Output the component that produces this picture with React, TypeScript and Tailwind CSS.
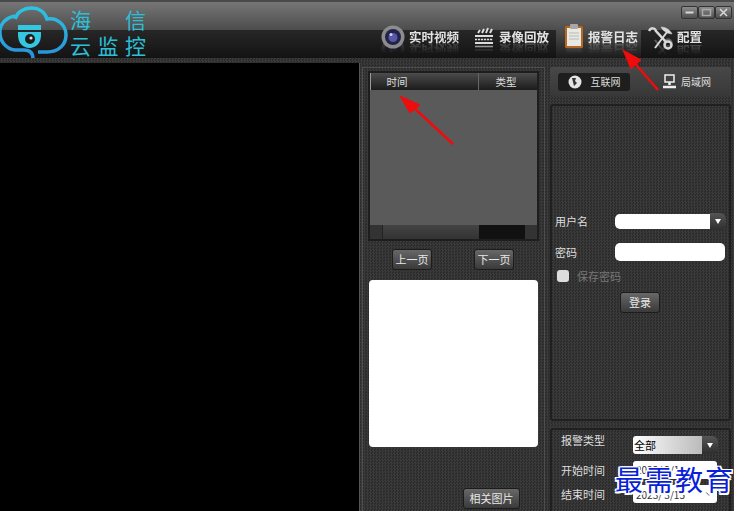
import { ChevronDown } from "lucide-react"

const font = "font-['Noto_Sans_CJK_SC','Liberation_Sans',sans-serif]"
const dots = "bg-[repeating-conic-gradient(#3a3a3a_0_25%,#2b2b2b_0_50%)] bg-[length:3px_3px]"
const reflect = "[-webkit-box-reflect:below_-12px_linear-gradient(transparent_30%,rgba(255,255,255,0.4))]"

function Logo() {
  return (
    <svg width="68" height="60" viewBox="0 0 68 60" className="shrink-0">
      <defs>
        <linearGradient id="cloud" x1="0" y1="0" x2="0" y2="1">
          <stop offset="0" stopColor="#2cc4e0" />
          <stop offset="1" stopColor="#2a8fd8" />
        </linearGradient>
      </defs>
      <path
        d="M15 14 C8 15 1 20 0 28 C-1 39 6 47 15 48 L24 48 C29 48 33 50 33 57 M15 17 C17 10 24 6 31 6 C39 6 45 10 47 17 C57 15 66 23 66 33 C66 43 58 50 47 50 L38 50"
        fill="none"
        stroke="url(#cloud)"
        strokeWidth="3.5"
      />
      <path d="M18 23 H41 V28 H18 Z" fill="#35c6e2" />
      <path d="M18 30 H41 V33 C41 41 36 46 29.5 46 C23 46 18 41 18 33 Z" fill="#35c6e2" />
      <circle cx="30" cy="37" r="5" fill="#1c1c1c" />
      <circle cx="31" cy="36" r="1.6" fill="#ddd" />
    </svg>
  )
}

function NavItem({
  icon,
  label,
  active,
  className,
}: {
  icon: React.ReactNode
  label: string
  active?: boolean
  className: string
}) {
  return (
    <div
      className={`flex h-[37px] items-start rounded-t-md pt-[4px] text-[12.5px] font-bold text-[#e2e2e2] ${active ? "bg-gradient-to-b from-[#5c5c5c] via-[#3e3e3e] to-[#1c1c1c]" : ""} ${className}`}
    >
      <div className={`flex items-center gap-[4px] ${reflect}`}>
        {icon}
        <span>{label}</span>
      </div>
    </div>
  )
}

function Btn({ label, className = "" }: { label: string; className?: string }) {
  return (
    <button
      className={`flex h-[21px] items-center justify-center rounded-[3px] border border-[#1c1c1c] bg-gradient-to-b from-[#686868] to-[#3a3a3a] text-[11px] text-[#e8e8e8] ${className}`}
    >
      {label}
    </button>
  )
}

function DropArrow() {
  return (
    <div className="flex h-full w-[16px] items-center justify-center rounded-r-md bg-gradient-to-b from-[#555] to-[#2e2e2e]">
      <div className="h-0 w-0 border-x-[3px] border-t-[5px] border-x-transparent border-t-white" />
    </div>
  )
}

function WinBtn({ children }: { children: React.ReactNode }) {
  return (
    <div className="flex h-[13px] w-[17px] items-center justify-center rounded-[2px] border border-[#333] bg-gradient-to-b from-[#8c8c8c] to-[#4e4e4e]">
      <svg width="11" height="9" viewBox="0 0 11 9" fill="none" stroke="#d8d8d8" strokeWidth="1.5">
        {children}
      </svg>
    </div>
  )
}

export default function App() {
  return (
    <div className={`relative h-[511px] w-[738px] overflow-hidden bg-white ${font}`}>
      <div className="flex h-full w-[734px] flex-col border-t-2 border-[#4a4a4a]">
        <header className="flex h-[56px] shrink-0 items-start justify-between bg-[linear-gradient(#767676_0%,#4c4c4c_50%,#272727_50%,#131313_100%)]">
          <div className="flex items-start">
            <Logo />
            <div className="ml-[2px] mt-[4px] grid grid-cols-3 text-[21px] leading-[26px] text-[#2bc0d8]">
              <span className="w-[27.5px]">海</span>
              <span className="w-[27.5px]"></span>
              <span className="w-[27.5px]">信</span>
              <span>云</span>
              <span>监</span>
              <span>控</span>
            </div>
          </div>
          <div className="flex flex-col items-end">
            <div className="mr-[2px] mt-[4px] flex">
              <WinBtn>
                <path d="M1.5 4.5 H9.5" strokeWidth="2" />
              </WinBtn>
              <WinBtn>
                <rect x="1.5" y="1.5" width="8" height="6" stroke="#aaa" />
              </WinBtn>
              <WinBtn>
                <path d="M2 1 L9 8 M9 1 L2 8" />
              </WinBtn>
            </div>
            <nav className="mr-[24px] mt-[2px] flex items-end">
              <NavItem
                className="w-[93px] pl-[8px]"
                label="实时视频"
                icon={
                  <svg width="24" height="24" viewBox="0 0 24 24">
                    <circle cx="12" cy="12" r="11.5" fill="#8c8c8c" />
                    <circle cx="12" cy="12" r="8" fill="#22224a" />
                    <circle cx="12" cy="12.5" r="4.5" fill="#5858a8" />
                    <circle cx="10" cy="9.5" r="1.5" fill="#cfd2f5" />
                  </svg>
                }
              />
              <NavItem
                className="w-[90px] pl-[7px]"
                label="录像回放"
                icon={
                  <svg width="22" height="24" viewBox="0 0 22 24" fill="none" stroke="#dcdcdc">
                    <path d="M5 8 L7 5 M9 8 L11 4 M13 8 L15 3 M17 8 L19 4" strokeWidth="2" />
                    <path d="M2 11 H20" strokeWidth="2" />
                    <path d="M2 14.5 H20" strokeWidth="1.5" strokeDasharray="2 1" />
                    <path d="M2 18 H20" strokeWidth="2" />
                    <path d="M2 21.5 H20" strokeWidth="1.5" stroke="#999" />
                  </svg>
                }
              />
              <NavItem
                active
                className="w-[85px] pl-[8px]"
                label="报警日志"
                icon={
                  <svg width="20" height="26" viewBox="0 0 20 26" className="mt-[-2px]">
                    <rect x="1" y="3" width="18" height="22" rx="1.5" fill="#b5681f" />
                    <rect x="3" y="5" width="14" height="18" fill="#e8e8e4" />
                    <rect x="6" y="1" width="8" height="5" rx="1" fill="#a8a8a8" />
                    <path d="M5 10 H15 M5 13 H15 M5 16 H15" stroke="#b8b8b8" />
                  </svg>
                }
              />
              <NavItem
                className="w-[69px] pl-[7px]"
                label="配置"
                icon={
                  <svg width="25" height="25" viewBox="0 0 25 25" fill="none" stroke="#d8d8d8">
                    <path d="M1 6 C3 2 7 3 8 6 L18 17" strokeWidth="2.5" />
                    <path d="M7 23 L19 7" strokeWidth="2" />
                    <path d="M13 2 C18 2 22 5 24 9 L19 8 L15 5 Z" fill="#d8d8d8" strokeWidth="0.5" />
                    <circle cx="20" cy="20" r="3.5" strokeWidth="2.5" />
                  </svg>
                }
              />
            </nav>
          </div>
        </header>

        <div className={`flex min-h-0 flex-1 ${dots}`}>
          <div className="mt-[5px] w-[360px] shrink-0 border-r border-[#555] bg-black" />

          <section className="mt-[9px] ml-[2px] flex w-[183px] shrink-0 flex-col items-center border-x border-t border-[#4e4e4e]">
            <div className="mt-[3px] -ml-[1px] flex h-[170px] w-[171px] flex-col border-2 border-[#1e1e1e] bg-[#5a5a5a]">
              <div className="flex h-[17px] border-l border-[#999] bg-gradient-to-b from-[#4c4c4c] to-[#1c1c1c] text-[10.5px] leading-[17px] text-[#ddd]">
                <span className="w-[108px] border-r border-[#666] pl-[16px]">时间</span>
                <span className="flex-1 pl-[17px]">类型</span>
              </div>
              <div className="flex-1" />
              <div className="flex h-[14px] bg-[#333]">
                <div className="w-[13px] border-r border-[#222]" />
                <div className="w-[96px] bg-gradient-to-b from-[#444] to-[#333]" />
                <div className="w-[46px] bg-[#111]" />
              </div>
            </div>
            <div className="mt-[8px] -ml-[1px] flex w-[170px] justify-between px-[24px]">
              <Btn label="上一页" className="w-[40px]" />
              <Btn label="下一页" className="w-[40px]" />
            </div>
            <div className="mt-[10px] h-[167px] w-[169px] rounded-[4px] bg-white" />
            <Btn label="相关图片" className="mt-[41px] ml-[76px] h-[21px] w-[57px]" />
          </section>

          <aside className="flex w-[186px] shrink-0 flex-col pl-[5px]">
            <div className="mt-[9px] flex h-[29px] w-[181px] items-center rounded-[3px] bg-gradient-to-b from-[#484848] to-[#383838] pl-[8px] text-[10px] text-[#ddd]">
              <div className="flex h-[18px] w-[72px] items-center justify-center gap-[9px] rounded-[3px] bg-[#1e1e1e]">
                <svg width="14" height="14" viewBox="0 0 14 14">
                  <circle cx="7" cy="7" r="6.5" fill="#e4e4e4" />
                  <path d="M4 3 L8 3 L7 6 L9 8 L6 11 L5 7 Z" fill="#333" />
                </svg>
                <span>互联网</span>
              </div>
              <div className="ml-[32px] flex items-center gap-[4px]">
                <svg width="15" height="15" viewBox="0 0 15 15" fill="none" stroke="#eee" strokeWidth="1.5">
                  <rect x="3" y="1" width="9" height="7" />
                  <path d="M7.5 8 V11 M1 13 H14" strokeWidth="2.5" />
                </svg>
                <span>局域网</span>
              </div>
            </div>

            <div className="mt-[8px] flex h-[317px] w-[181px] flex-col rounded-[3px] border-2 border-[#202020] pl-[2px] text-[11px] text-[#ddd]">
              <div className="mt-[107px] flex h-[17px] items-center">
                <span className="w-[61px] pl-[1px]">用户名</span>
                <div className="flex h-[17px] w-[111px] items-center">
                  <div className="h-[15px] flex-1 rounded-l-[5px] bg-white" />
                  <DropArrow />
                </div>
              </div>
              <div className="mt-[13px] flex h-[18px] items-center">
                <span className="w-[61px] pl-[1px]">密码</span>
                <div className="h-[18px] w-[110px] rounded-[5px] bg-white" />
              </div>
              <div className="mt-[8px] flex h-[14px] items-center gap-[8px] text-[#777]">
                <div className="ml-[3px] h-[12px] w-[12px] rounded-[3px] bg-[#ddd]" />
                <span>保存密码</span>
              </div>
              <Btn label="登录" className="mt-[9px] ml-[66px] w-[40px]" />
            </div>

            <div className="mt-[7px] min-h-0 w-[181px] flex-1 rounded-t-[3px] border-2 border-b-0 border-[#202020] pl-[9px] text-[11px] text-[#ddd]">
              <div className="mt-[2px] flex h-[22px] items-start">
                <span className="w-[72px] leading-[16px]">报警类型</span>
                <div className="mt-[4px] flex h-[18px] w-[85px] items-center">
                  <div className="h-full flex-1 rounded-l-[3px] bg-gradient-to-r from-white to-[#bbb] pl-[1px] text-[11px] leading-[18px] text-black">
                    全部
                  </div>
                  <DropArrow />
                </div>
              </div>
              <div className="mt-[7px] flex h-[18px] items-center">
                <span className="w-[72px]">开始时间</span>
                <div className="h-[18px] w-[84px] rounded-[3px] bg-white pl-[3px] text-[10px] leading-[18px] text-[#333]">
                  2023/ 3/15
                </div>
              </div>
              <div className="mt-[6px] flex h-[18px] items-center">
                <span className="w-[72px]">结束时间</span>
                <div className="flex h-[18px] w-[84px] items-center justify-between rounded-[3px] bg-white px-[3px] text-[10px] text-[#333]">
                  <span>2023/ 3/15</span>
                  <ChevronDown size={10} />
                </div>
              </div>
            </div>
          </aside>
        </div>
      </div>

      {/* red annotation arrows */}
      <svg width="738" height="511" className="pointer-events-none absolute left-0 top-0">
        <g fill="#ee0c0c" stroke="#ee0c0c">
          <path d="M453 144 L412 106" strokeWidth="2.5" />
          <path d="M400 96 L420 105 L410 113 Z" />
          <path d="M658 90 L632 60" strokeWidth="2.5" />
          <path d="M623 50 L641 60 L631 69 Z" />
        </g>
      </svg>

      <div className="absolute left-[615px] top-[461px] text-[28px] leading-[36px] tracking-[2px] text-[#0a1fd8] [text-shadow:1.5px_0_0_#fff,-1.5px_0_0_#fff,0_1.5px_0_#fff,0_-1.5px_0_#fff,1.5px_1.5px_0_#fff,-1.5px_-1.5px_0_#fff,1.5px_-1.5px_0_#fff,-1.5px_1.5px_0_#fff]">
        最需教育
      </div>
    </div>
  )
}
